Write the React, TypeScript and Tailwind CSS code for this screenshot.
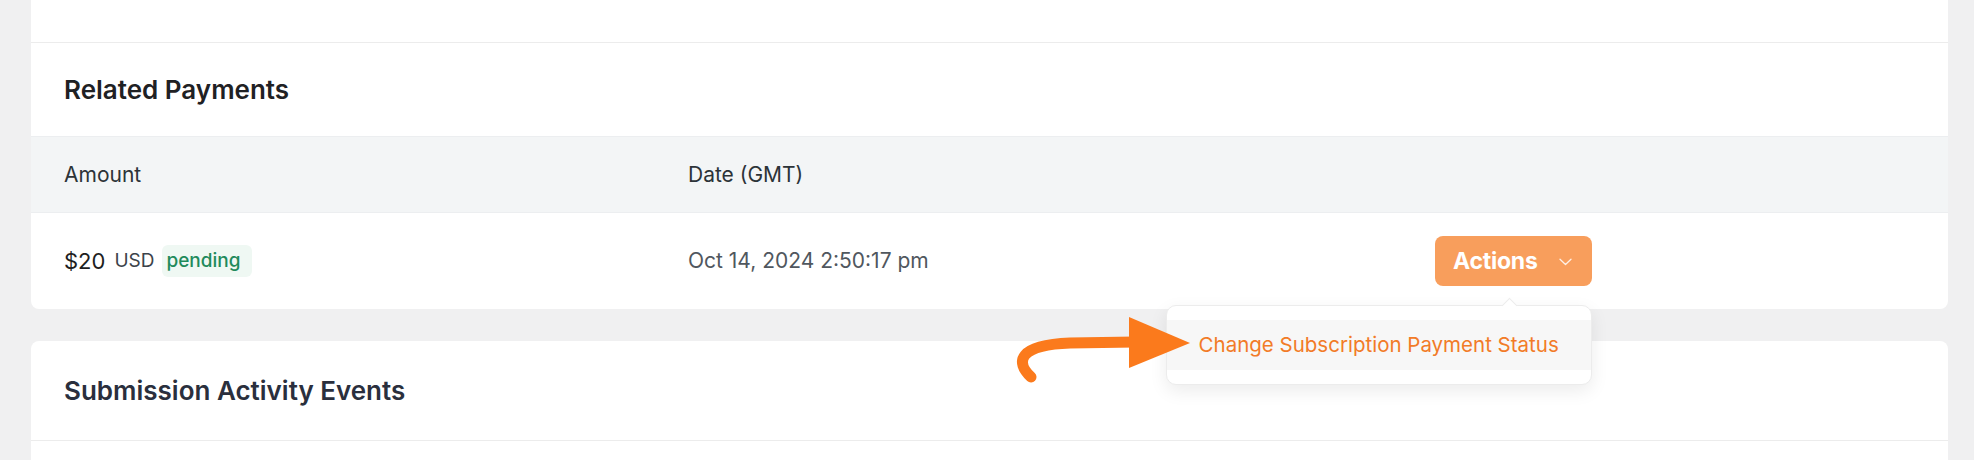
import React from 'react';

const cols = 'grid grid-cols-[624px_747px_1fr] items-center';

const ChevronDown = () => (
  <svg width="13" height="8" viewBox="0 0 13 8" fill="none" className="ml-[21px] mt-[2px]">
    <path d="M1 1.2 L6.5 6.5 L12 1.2" stroke="white" strokeOpacity="0.85" strokeWidth="1.3" strokeLinecap="round" strokeLinejoin="round" />
  </svg>
);

// hand-drawn pointer from the screenshot annotation
const PointerArrow = () => (
  <svg
    className="pointer-events-none absolute left-[1000px] top-[300px] z-30"
    width="200"
    height="90"
    viewBox="0 0 200 90"
    fill="none"
  >
    <path
      d="M31 77 C15 62, 18 45, 70 43 L135 42"
      stroke="#fb7a1c"
      strokeWidth="11"
      strokeLinecap="round"
      strokeLinejoin="round"
    />
    <polygon points="129,17 190,43 129,68" fill="#fb7a1c" />
  </svg>
);

const ActionsMenu = () => (
  <div className="relative w-fit">
    <button className="flex h-[50px] items-center rounded-[8px] bg-[#f89e5c] pl-[18px] pr-[20px] text-[23px] font-bold tracking-[-0.01em] text-white">
      Actions
      <ChevronDown />
    </button>
    <div className="absolute right-0 top-[69px] z-20 w-[426px] rounded-[10px] border border-[#ececec] bg-white py-[14px] shadow-[0_6px_18px_rgba(0,0,0,0.08)]">
      <div className="absolute -top-[6px] right-[76px] h-[11px] w-[11px] rotate-45 border-l border-t border-[#ececec] bg-white" />
      <div className="flex h-[50px] items-center whitespace-nowrap bg-[#f7f7f7] pl-[32px] text-[20.5px] text-[#f27b27]">
        Change Subscription Payment Status
      </div>
    </div>
  </div>
);

export default function App() {
  return (
    <div className="relative h-[460px] w-[1974px] overflow-hidden bg-[#f0f0f1] pl-[31px] pr-[26px] font-['Inter',sans-serif]">
      <section className="rounded-b-lg bg-white">
        <div className="h-[43px] border-b border-[#ececec]" />
        <div className="flex h-[93px] items-center px-[33px]">
          <h2 className="text-[26px] font-semibold text-[#1f2124]">Related Payments</h2>
        </div>

        <div className={`${cols} h-[77px] border-y border-[#eceef0] bg-[#f3f5f6] text-[21px] text-[#2c3338]`}>
          <div className="px-[33px]">Amount</div>
          <div className="px-[33px]">Date (GMT)</div>
          <div />
        </div>

        <div className={`${cols} h-[96px]`}>
          <div className="flex items-center px-[33px]">
            <span className="text-[22px] text-[#1e1e1e]">$20</span>
            <span className="ml-[9px] text-[19px] text-[#3c434a]">USD</span>
            <span className="ml-[8px] flex h-[32px] w-[90px] items-center rounded-[6px] bg-[#eff8f3] pl-[4px] text-[19px] font-medium text-[#1f8b5c]">
              pending
            </span>
          </div>
          <div className="px-[33px] text-[21px] text-[#50575e]">Oct 14, 2024 2:50:17 pm</div>
          <div className="px-[33px]">
            <ActionsMenu />
          </div>
        </div>
      </section>

      <section className="mt-8 rounded-t-lg bg-white">
        <div className="flex h-[100px] items-center border-b border-[#ececec] px-[33px]">
          <h2 className="text-[26px] font-semibold text-[#2a2f3d]">Submission Activity Events</h2>
        </div>
        <div className="h-[40px]" />
      </section>

      <PointerArrow />
    </div>
  );
}
